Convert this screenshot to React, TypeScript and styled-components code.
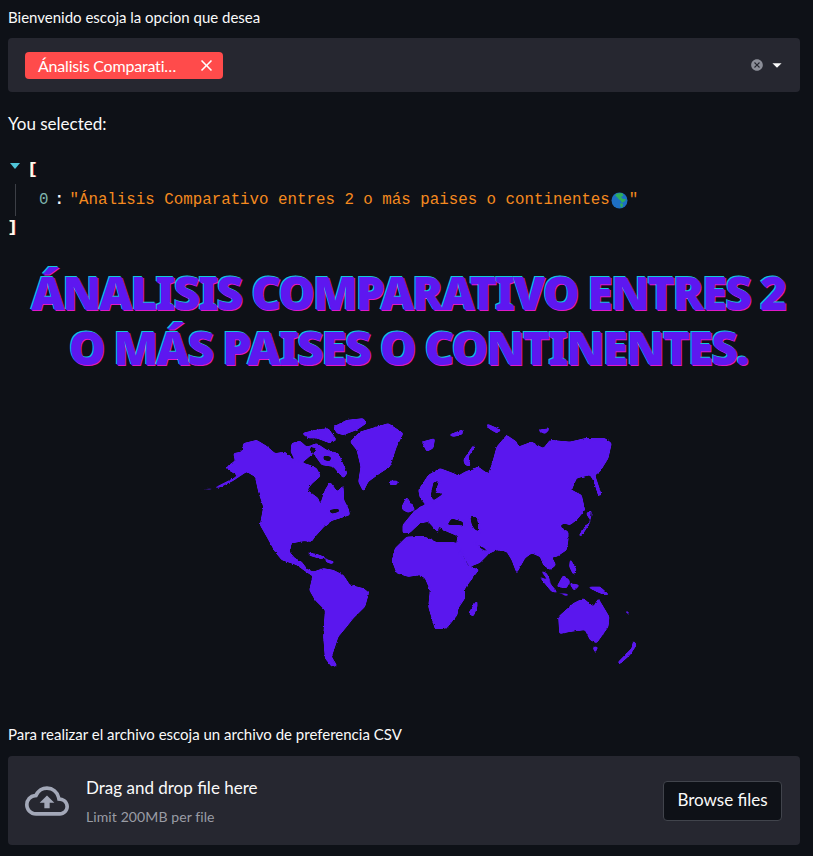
import React from "react";
import styled, { createGlobalStyle } from "styled-components";
import { MdOutlineCloudUpload, MdCancel, MdArrowDropDown, MdClose } from "react-icons/md";

const GlobalStyle = createGlobalStyle`
  html, body {
    margin: 0;
    padding: 0;
    background-color: #0e1117;
    color: #fafafa;
    font-family: "Lato", "Noto Sans", sans-serif;
    overflow: hidden;
  }
`;

const Page = styled.main`
  width: 813px;
  height: 856px;
  padding: 8px 13px 0 8px;
  box-sizing: border-box;
  display: flex;
  flex-direction: column;
`;

const FieldLabel = styled.label`
  display: block;
  font-size: 15px;
  line-height: 18px;
  color: #fafafa;
`;

const SelectBox = styled.div`
  margin-top: 12px;
  height: 54px;
  background-color: #262730;
  border-radius: 4px;
  display: flex;
  align-items: center;
  justify-content: space-between;
  padding: 0 17px;
`;

const Tag = styled.span`
  width: 198px;
  height: 27px;
  box-sizing: border-box;
  padding: 0 7px 0 13px;
  background-color: #ff4b4b;
  border-radius: 4px;
  display: flex;
  align-items: center;
  justify-content: space-between;
  font-size: 16px;
  letter-spacing: -0.2px;
  color: #fff;
`;

const SelectControls = styled.span`
  display: flex;
  align-items: center;
  margin-right: -5px;
  color: #8b8d97;
`;

const Caret = styled.span`
  display: flex;
  margin-left: 2px;
  color: #fafafa;
`;

const SelectedText = styled.p`
  margin: 22px 0 0;
  font-size: 17px;
  line-height: 20px;
`;

const JsonView = styled.div`
  margin-top: 22px;
  font-family: "Liberation Mono", "DejaVu Sans Mono", monospace;
  font-size: 15.8px;
  line-height: 28px;
  color: #fafafa;
`;

const JsonLine = styled.div`
  display: flex;
  align-items: center;
  height: 28px;
`;

const Arrow = styled.span`
  width: 0;
  height: 0;
  margin: 0 8px 8px 2px;
  border-left: 5.5px solid transparent;
  border-right: 5.5px solid transparent;
  border-top: 6px solid #4fc6d9;
`;

const Bracket = styled.span`
  font-weight: 700;
  text-shadow: -0.5px 0 #ffd23f, 0.5px 0 #c2185b;
`;

const JsonRow = styled.div`
  display: flex;
  align-items: center;
  height: 32px;
  margin: 0 0 -2px 7px;
  padding-left: 23px;
  border-left: 1px solid #3c3f46;
`;

const JsonKey = styled.span`
  color: #7fb5ad;
`;

const JsonColon = styled.span`
  margin: 0 5px 0 6px;
  width: 10px;
  font-weight: 700;
`;

const JsonValue = styled.span`
  display: flex;
  align-items: center;
  color: #f58a1f;
`;

const Title = styled.h1`
  margin: 23px 0 0;
  padding: 0 10px 0 18px;
  font-family: "Noto Sans", "Lato", sans-serif;
  font-size: 46px;
  font-weight: 900;
  line-height: 55px;
  letter-spacing: -1.9px;
  text-align: center;
  text-transform: uppercase;
  color: #5e17f0;
  text-shadow: -1px -1px 0 #12c7d8, 1px 1px 0 #e018c8;
`;

const MapFrame = styled.div`
  margin-top: 35px;
  height: 265px;
  display: flex;
  padding-left: 192px;
`;

const UploadLabel = styled(FieldLabel)`
  margin-top: 50px;
`;

const DropZone = styled.section`
  margin-top: 13px;
  height: 89px;
  box-sizing: border-box;
  padding: 0 18px 0 17px;
  background-color: #262730;
  border-radius: 4px;
  display: flex;
  align-items: center;
`;

const CloudIcon = styled.span`
  display: flex;
  color: #a3a8b8;
`;

const DropText = styled.div`
  flex: 1;
  margin-left: 17px;
  padding-top: 2px;
  display: flex;
  flex-direction: column;
  gap: 9px;
`;

const DropTitle = styled.span`
  font-size: 17px;
  line-height: 22px;
`;

const DropHint = styled.span`
  font-size: 14px;
  line-height: 18px;
  letter-spacing: 0.1px;
  color: #9a9ca5;
`;

const BrowseButton = styled.button`
  width: 119px;
  height: 40px;
  padding: 0 0 2px;
  background-color: #0e1117;
  border: 1px solid #41444c;
  border-radius: 4px;
  color: #fafafa;
  font-family: inherit;
  font-size: 17px;
`;

const GlobeIcon = () => (
  <svg width="17" height="17" viewBox="0 0 17 17" style={{ margin: "0 1px" }}>
    <circle cx="8.5" cy="8.5" r="8" fill="#1d6fc4" />
    <path d="M6 1.5 L11 1 L12.5 3.5 L10 5 L12 7 L15 7 L14 9 L11 11 L10 9 L7.5 7 L6 5 L4 3.5Z" fill="#2fae5a" />
    <path d="M9.5 11 L12 12 L11.5 15 L10 15.5 L9.2 13Z" fill="#2fae5a" />
  </svg>
);

const WorldMap = () => (
  <svg width="450" height="265" viewBox="0 0 1350 795" fill="#5a17ee" fillRule="evenodd">
    <defs>
      <filter id="coast" x="-5%" y="-5%" width="110%" height="110%" colorInterpolationFilters="sRGB">
        <feGaussianBlur in="SourceGraphic" stdDeviation="3" result="soft" />
        <feComponentTransfer in="soft" result="rounded">
          <feFuncA type="linear" slope="5" intercept="-1.7" />
        </feComponentTransfer>
        <feTurbulence type="fractalNoise" baseFrequency="0.12" numOctaves="2" seed="4" result="noise" />
        <feDisplacementMap in="rounded" in2="noise" scale="7" xChannelSelector="R" yChannelSelector="G" />
      </filter>
    </defs>
    <g filter="url(#coast)">
      {/* americas */}
      <path d="M0 238L40 235L70 220L100 205L128 186L110 195L85 180L80 170L105 152L100 130L125 125L130 100L170 90L200 108L225 130L255 125L280 150L330 165L350 175L362 198L335 222L322 240L355 265L360 285L375 240L390 215L412 245L430 225L432 270L445 295L450 315L420 325L395 332L372 350L345 380L335 395L312 393L275 400L268 425L285 445L305 455L322 478L340 485L370 475L400 480L430 495L450 525L490 535L507 548L495 590L460 625L440 650L415 680L405 710L395 740L412 768L395 770L375 745L370 680L375 600L345 570L328 540L338 498L320 487L290 465L245 450L225 425L200 380L180 345L190 290L175 245L165 200L140 185L100 212L60 232L30 240L0 240Z M385 300L415 295L420 305L395 312Z" />
      <path d="M400 50L440 30L490 25L500 40L470 60L430 75L410 70Z" />
      <path d="M305 70L345 60L385 55L410 90L390 100L350 85L325 85Z" />
      <path d="M275 100L300 92L320 110L350 100L380 120L415 130L442 190L430 205L400 170L365 165L340 130L310 155L285 150L272 125Z M330 110L350 115L345 130L330 125Z M370 135L395 140L390 155L370 150Z" />
      <path d="M450 95L480 65L530 50L565 40L610 70L590 110L570 170L540 190L505 215L490 245L475 215L482 170L470 120Z" />
      <path d="M565 212L595 212L590 225L570 225Z" />
      <path d="M320 428L350 432L385 445L360 446L330 437Z" />
      <path d="M375 447L405 455L395 462L378 456Z" />
      <g transform="translate(600 0)">
        {/* africa */}
        <path d="M-25 450L-15 415L20 380L70 378L110 397L165 397L205 472L238 478L195 535L195 565L175 595L172 615L140 655L105 658L85 590L90 540L75 505L60 495L25 500L-10 490Z" />
        <path d="M205 610L232 568L232 590L220 620Z" />
        {/* eurasia */}
        <path d="M8 345L35 312L60 290L100 275L75 282L60 265L55 240L85 195L120 175L160 190L175 197L195 185L235 170L255 185L265 190L275 165L290 110L320 75L350 95L355 110L395 95L430 115L450 90L510 95L555 85L615 85L635 100L625 145L600 185L585 195L605 255L595 258L582 215L570 195L530 205L515 240L545 255L555 300L530 330L510 345L490 340L480 350L505 365L505 390L500 420L470 440L455 440L468 465L450 480L430 465L420 440L395 430L375 445L350 490L335 450L320 425L290 420L270 430L255 415L225 398L240 415L268 430L240 458L210 470L170 398L172 378L135 362L112 350L118 372L85 335L60 340L30 368L8 370Z M140 345L155 325L190 335L190 347L165 345Z M210 320L230 320L240 365L225 360L215 345Z M100 215L118 212L105 250L135 248L100 272L92 255Z" />
        <path d="M5 290L20 260L45 298L25 308L8 300Z" />
        <path d="M190 150L220 105L225 110L205 140L212 170L195 165Z" />
        <path d="M65 95L105 85L100 115L80 125Z" />
        <path d="M145 75L190 58L185 75L160 80Z" />
        <path d="M258 40L305 60L290 70L265 55Z" />
        <path d="M410 60L452 55L435 72Z" />
        <path d="M535 378L570 330L558 310L575 300L572 335L545 378Z" />
        <path d="M420 480L440 490L458 525L440 505Z" />
        <path d="M415 497L440 510L472 545L455 545Z" />
        <path d="M455 545L510 553L500 558Z" />
        <path d="M470 530L490 495L510 512L500 535Z" />
        <path d="M510 445L530 480L520 495L508 470Z" />
        <path d="M508 520L540 525L522 542Z" />
        <path d="M560 530L600 530L632 558L600 550Z" />
        <path d="M675 600L692 610L680 612Z" />
        <path d="M475 620L520 580L550 565L580 590L595 565L628 620L625 650L590 700L570 690L555 660L510 665L478 672Z" />
        <path d="M578 710L595 710L585 730Z" />
        <path d="M652 758L695 715L700 690L710 705L690 735L660 762Z" />
      </g>
    </g>
  </svg>
);

const App = () => (
  <Page>
    <GlobalStyle />
    <FieldLabel>Bienvenido escoja la opcion que desea</FieldLabel>
    <SelectBox>
      <Tag>
        Ánalisis Comparati…
        <MdClose size={19} />
      </Tag>
      <SelectControls>
        <MdCancel size={14} />
        <Caret>
          <MdArrowDropDown size={22} />
        </Caret>
      </SelectControls>
    </SelectBox>
    <SelectedText>You selected:</SelectedText>
    <JsonView>
      <JsonLine>
        <Arrow />
        <Bracket>[</Bracket>
      </JsonLine>
      <JsonRow>
        <JsonKey>0</JsonKey>
        <JsonColon>:</JsonColon>
        <JsonValue>
          "Ánalisis Comparativo entres 2 o más paises o continentes
          <GlobeIcon />"
        </JsonValue>
      </JsonRow>
      <JsonLine>
        <Bracket>]</Bracket>
      </JsonLine>
    </JsonView>
    <Title>Ánalisis Comparativo entres 2 o más paises o continentes.</Title>
    <MapFrame>
      <WorldMap />
    </MapFrame>
    <UploadLabel>Para realizar el archivo escoja un archivo de preferencia CSV</UploadLabel>
    <DropZone>
      <CloudIcon>
        <MdOutlineCloudUpload size={44} />
      </CloudIcon>
      <DropText>
        <DropTitle>Drag and drop file here</DropTitle>
        <DropHint>Limit 200MB per file</DropHint>
      </DropText>
      <BrowseButton>Browse files</BrowseButton>
    </DropZone>
  </Page>
);

export default App;
